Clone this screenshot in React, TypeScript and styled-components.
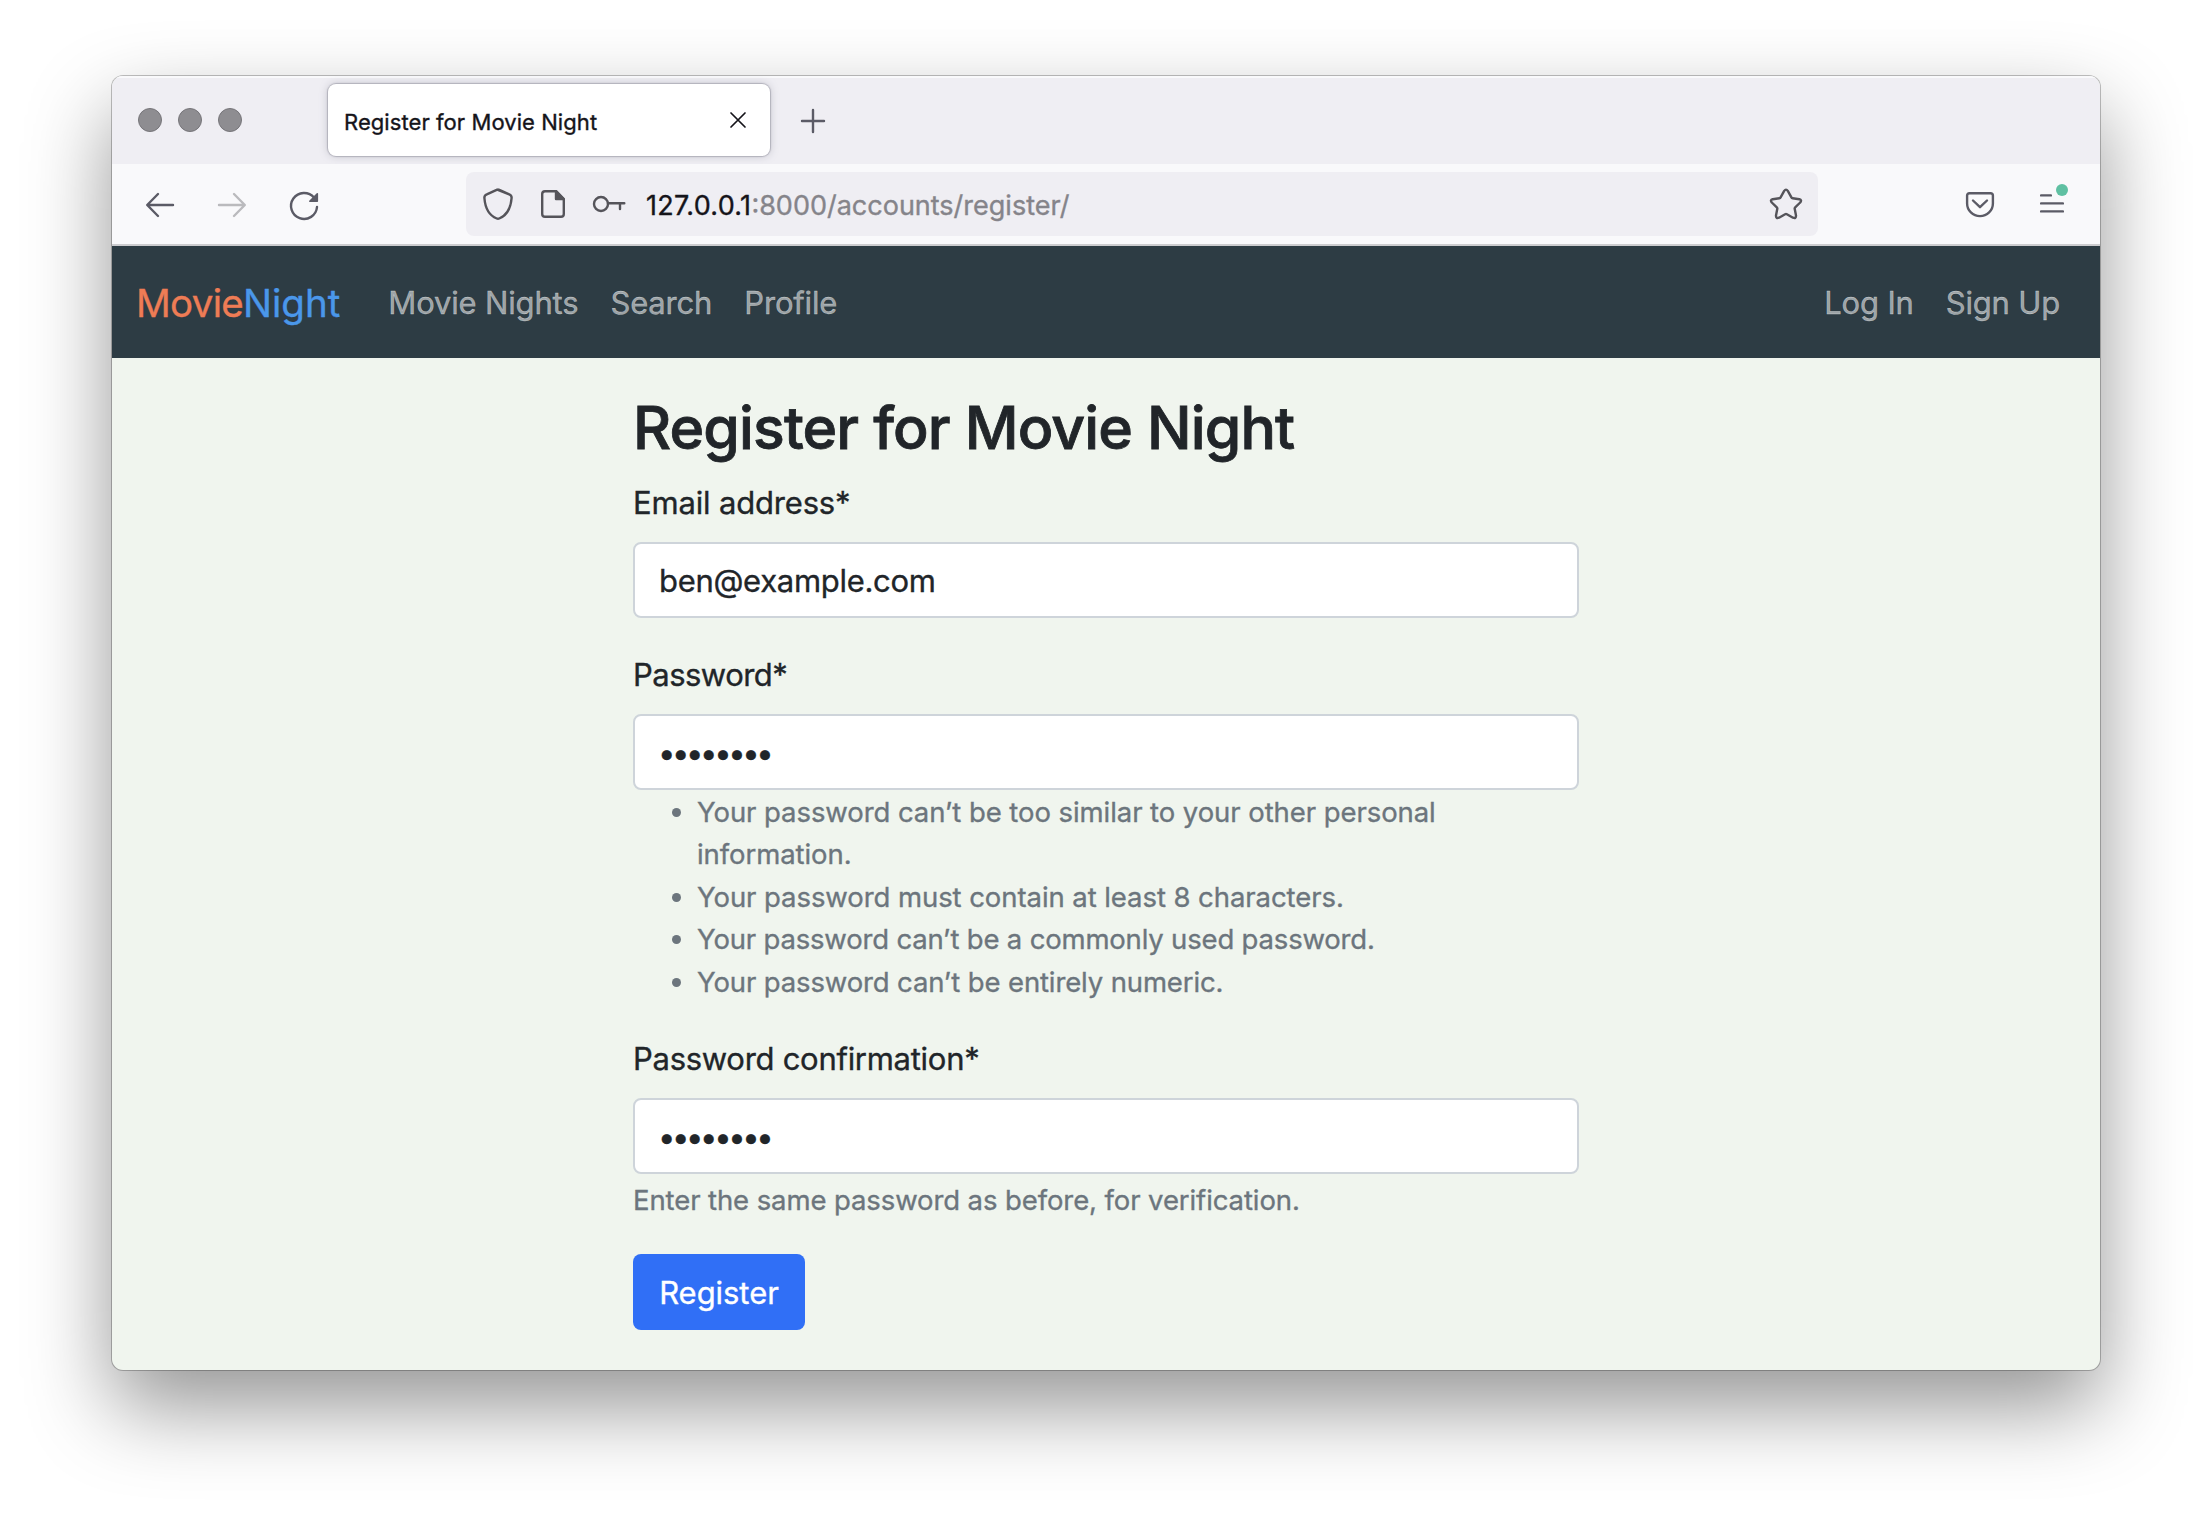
import React from "react";
import styled, { createGlobalStyle } from "styled-components";

const GlobalStyle = createGlobalStyle`
  *, *::before, *::after { box-sizing: border-box; }
  body {
    margin: 0;
    background: #fff;
    font-family: Inter, "Liberation Sans", sans-serif;
    color: #212529;
    -webkit-text-stroke: 0.35px currentColor;
  }
`;

const Desktop = styled.div`
  height: 1518px;
  padding: 76px 112px 148px;
  overflow: hidden;
`;

const BrowserWindow = styled.div`
  display: flex;
  flex-direction: column;
  width: 1988px;
  height: 1294px;
  border-radius: 11px;
  overflow: hidden;
  background: #f0f5ee;
  box-shadow: 0 0 0 1px rgba(0, 0, 0, 0.24), 0 37px 84px rgba(0, 0, 0, 0.42);
`;

const TabBar = styled.div`
  display: flex;
  align-items: center;
  height: 88px;
  padding-left: 26px;
  background: #efeef3;
  box-shadow: inset 0 2px 0 #f9f9fb;
`;

const TrafficLights = styled.div`
  display: flex;
  gap: 16px;
  margin-right: 86px;
`;

const Light = styled.span`
  width: 24px;
  height: 24px;
  border: 1px solid #767579;
  border-radius: 50%;
  background: #8e8d91;
`;

const Tab = styled.div`
  display: flex;
  align-items: center;
  justify-content: space-between;
  width: 442px;
  height: 72px;
  margin-right: 31px;
  padding: 0 24px 0 16px;
  border-radius: 8px;
  background: #fff;
  box-shadow: 0 0 1px 1px rgba(128, 128, 142, 0.45), 0 0 8px rgba(128, 128, 142, 0.4);
`;

const TabTitle = styled.span`
  padding-top: 4px;
  color: #15141a;
  font-size: 22px;
  letter-spacing: 0.07px;
`;

const Icon = styled.svg<{ $color?: string; $shift?: number; $weight?: number }>`
  display: block;
  flex: none;
  margin-top: ${(p) => p.$shift ?? 0}px;
  overflow: visible;
  fill: none;
  stroke: ${(p) => p.$color ?? "#5b5b66"};
  stroke-width: ${(p) => p.$weight ?? 2.4};
  stroke-linecap: round;
  stroke-linejoin: round;
`;

const Toolbar = styled.div`
  display: flex;
  align-items: center;
  height: 82px;
  padding-left: 34px;
  border-bottom: 2px solid #cccccf;
  background: #f9f9fb;
`;

const HistoryButtons = styled.div`
  display: flex;
  align-items: center;
  gap: 44px;
  margin-right: 148px;
`;

const AddressBar = styled.div`
  display: flex;
  align-items: center;
  width: 1352px;
  height: 64px;
  margin-right: 148px;
  padding: 0 16px 0 17px;
  border-radius: 8px;
  background: #efeef3;
`;

const SiteIcons = styled.div`
  display: flex;
  align-items: center;
  gap: 28px;
  margin-right: 20px;
`;

const Url = styled.span`
  flex: 1;
  padding-top: 2px;
  color: #85848a;
  font-size: 27px;
`;

const Host = styled.span`
  color: #15141a;
  letter-spacing: 0.3px;
`;

const ToolbarActions = styled.div`
  display: flex;
  align-items: center;
  gap: 46px;
`;

const Navbar = styled.nav`
  display: flex;
  align-items: center;
  height: 112px;
  padding: 0 40px 0 24px;
  background: #2d3c44;
`;

const Brand = styled.a`
  margin-right: 48px;
  padding-top: 1px;
  color: #4a97ea;
  font-size: 38.5px;
`;

const BrandAccent = styled.span`
  color: #ee7c55;
  letter-spacing: -0.7px;
`;

const NavLinks = styled.div<{ $end?: boolean }>`
  display: flex;
  gap: 32px;
  margin-left: ${(p) => (p.$end ? "auto" : "0")};
  padding-top: 1px;
`;

const NavLink = styled.a`
  color: rgba(255, 255, 255, 0.55);
  font-size: 31px;
  letter-spacing: -0.17px;
`;

const Page = styled.main`
  display: flex;
  flex: 1;
  flex-direction: column;
  align-items: flex-start;
  width: 946px;
  margin: 0 auto;
  padding-top: 34px;
`;

const Title = styled.h1`
  margin: 0 0 15px;
  font-size: 59px;
  font-weight: 500;
  line-height: 72px;
  letter-spacing: -0.87px;
  white-space: nowrap;
  -webkit-text-stroke-width: 0.8px;
`;

const Field = styled.div<{ $gap: number }>`
  width: 100%;
  margin-bottom: ${(p) => p.$gap}px;
`;

const Label = styled.label<{ $tracking: number }>`
  display: block;
  margin-bottom: 15px;
  font-size: 31px;
  line-height: 48px;
  letter-spacing: ${(p) => p.$tracking}px;
`;

const Input = styled.input`
  display: block;
  width: 100%;
  height: 76px;
  padding: 12px 24px 12px ${(p) => (p.type === "password" ? 23 : 24)}px;
  border: 2px solid #ced4da;
  border-radius: 8px;
  outline: none;
  background: #fff;
  color: #212529;
  font-family: inherit;
  font-size: 31px;
  line-height: 48px;
  letter-spacing: ${(p) => (p.type === "password" ? "-3.4px" : "-0.3px")};
`;

const Rules = styled.ul`
  margin: 0;
  padding: 1px 0 0 64px;
  color: #6c757d;
  font-size: 27.5px;
  line-height: 42.4px;
`;

const Rule = styled.li<{ $tracking: number }>`
  max-width: 800px;
  letter-spacing: ${(p) => p.$tracking}px;
`;

const HelpText = styled.div`
  margin-top: 5px;
  color: #6c757d;
  font-size: 27.5px;
  line-height: 42px;
  letter-spacing: -0.1px;
`;

const SubmitButton = styled.button`
  width: 172px;
  height: 76px;
  padding: 1px 0 0;
  border: 0;
  border-radius: 8px;
  background: #306ff6;
  color: #fff;
  font-family: inherit;
  font-size: 31px;
  line-height: 48px;
  letter-spacing: -0.05px;
`;

const passwordRules = [
  { text: "Your password can’t be too similar to your other personal information.", tracking: -0.07 },
  { text: "Your password must contain at least 8 characters.", tracking: -0.07 },
  { text: "Your password can’t be a commonly used password.", tracking: -0.18 },
  { text: "Your password can’t be entirely numeric.", tracking: -0.13 },
];

export default function App() {
  return (
    <>
      <GlobalStyle />
      <Desktop>
        <BrowserWindow>
          <TabBar>
            <TrafficLights>
              <Light />
              <Light />
              <Light />
            </TrafficLights>
            <Tab>
              <TabTitle>Register for Movie Night</TabTitle>
              <Icon width="16" height="16" $color="#15141a" $weight={1.7}>
                <path d="M1 1l14 14M15 1L1 15" />
              </Icon>
            </Tab>
            <Icon width="24" height="24" $shift={2}>
              <path d="M12 1v22M1 12h22" />
            </Icon>
          </TabBar>

          <Toolbar>
            <HistoryButtons>
              <Icon width="28" height="24" $shift={2}>
                <path d="M27 12H1.5M12 1L1.2 12 12 23" />
              </Icon>
              <Icon width="28" height="24" $shift={2} $color="#bababd">
                <path d="M1 12h25.5M16 1l10.8 11L16 23" />
              </Icon>
              <Icon width="28" height="28" $shift={4}>
                <path d="M27 15A13 13 0 1 1 24 5.6" />
                <path d="M27.3 1.8V9.2H19.8z" fill="#5b5b66" strokeWidth="1.6" />
              </Icon>
            </HistoryButtons>
            <AddressBar>
              <SiteIcons>
                <Icon width="30" height="32" $color="#55545a">
                  <path d="M14.2 1.7L26.2 6.4Q28.8 7.4 28.6 10C27.900 19 25 27 16.200 30.500Q15 31.100 13.800 30.500C5 27 2.100 19 1.400 10Q1.200 7.400 3.800 6.400L14.200 1.700Q15 1.300 15.800 1.700L26.200 6.400" />
                </Icon>
                <Icon width="24" height="28" $color="#55545a">
                  <path d="M4 1.200H15L22.800 9V24Q22.800 26.800 20 26.800H4Q1.200 26.800 1.200 24V4Q1.200 1.200 4 1.200Z" />
                  <path d="M15 1.200V9H22.800Z" fill="#55545a" />
                </Icon>
                <Icon width="33" height="16" $color="#55545a">
                  <circle cx="8" cy="8" r="7" />
                  <path d="M15 7.300H31.300M27 7.300V13" />
                </Icon>
              </SiteIcons>
              <Url>
                <Host>127.0.0.1</Host>:8000/accounts/register/
              </Url>
              <Icon width="32" height="32" $color="#55545a">
                <path d="M14.200 2.900Q16 .3 17.800 2.900L21.400 9.400Q21.800 10.200 22.700 10.300L29.300 11.200Q32.200 12 30.200 14.500L25.200 19.300Q24.500 20 24.700 20.800L26 27.500Q26.200 30.800 23 29.700L16.900 26.200Q16 25.700 15.100 26.200L9 29.700Q5.800 30.800 6 27.500L7.300 20.800Q7.500 20 6.800 19.300L1.800 14.500Q-.2 12 2.700 11.200L9.300 10.300Q10.200 10.200 10.600 9.400Z" />
              </Icon>
            </AddressBar>
            <ToolbarActions>
              <Icon width="28" height="26" $shift={2}>
                <path d="M3.500 1.200H24.500Q26.900 1.200 26.900 3.600V11.500A12.900 12.600 0 0 1 1.100 11.500V3.600Q1.100 1.200 3.500 1.200Z" />
                <path d="M7 8.500L14 15.200 21 8.500" />
              </Icon>
              <Icon width="28" height="30" $shift={-12}>
                <path d="M1.100 12.400H10.900M1.100 20.400H22.900M1.100 28.400H22.900" />
                <circle cx="22" cy="7" r="6" fill="#5fc0a2" stroke="none" />
              </Icon>
            </ToolbarActions>
          </Toolbar>

          <Navbar>
            <Brand>
              <BrandAccent>Movie</BrandAccent>Night
            </Brand>
            <NavLinks>
              <NavLink>Movie Nights</NavLink>
              <NavLink>Search</NavLink>
              <NavLink>Profile</NavLink>
            </NavLinks>
            <NavLinks $end>
              <NavLink>Log In</NavLink>
              <NavLink>Sign Up</NavLink>
            </NavLinks>
          </Navbar>

          <Page>
            <Title>Register for Movie Night</Title>
            <Field $gap={33}>
              <Label $tracking={-0.17}>Email address*</Label>
              <Input type="text" defaultValue="ben@example.com" />
            </Field>
            <Field $gap={32}>
              <Label $tracking={-0.52}>Password*</Label>
              <Input type="password" defaultValue="password" />
              <Rules>
                {passwordRules.map((rule) => (
                  <Rule key={rule.text} $tracking={rule.tracking}>
                    {rule.text}
                  </Rule>
                ))}
              </Rules>
            </Field>
            <Field $gap={33}>
              <Label $tracking={-0.28}>Password confirmation*</Label>
              <Input type="password" defaultValue="password" />
              <HelpText>Enter the same password as before, for verification.</HelpText>
            </Field>
            <SubmitButton>Register</SubmitButton>
          </Page>
        </BrowserWindow>
      </Desktop>
    </>
  );
}
